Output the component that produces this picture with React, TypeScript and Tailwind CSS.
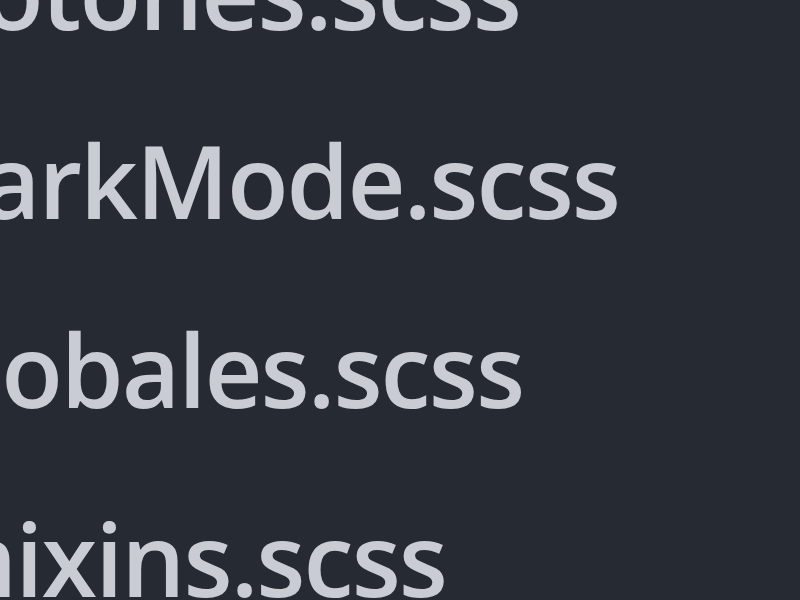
const FILES = ["botones.scss", "darkMode.scss", "globales.scss", "mixins.scss"]

export default function App() {
  return (
    <div className="w-[800px] h-[600px] overflow-hidden bg-[#262a33]">
      <div className="-mt-[103px] -ml-[79px] flex flex-col">
        {FILES.map((f) => (
          <div
            key={f}
            className="h-[189px] leading-[189px] whitespace-nowrap text-[101px] font-semibold text-[#c9cdd3] tracking-[-2px] [font-family:'Open_Sans',sans-serif]"
          >
            {f}
          </div>
        ))}
      </div>
    </div>
  )
}
